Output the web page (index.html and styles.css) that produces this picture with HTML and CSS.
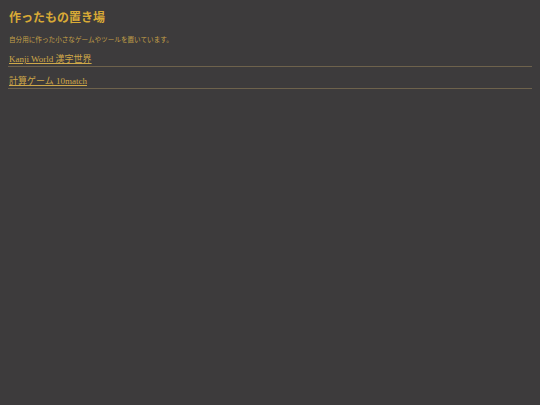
FILE: index.html
```html
<!DOCTYPE html>
<html lang="ja">
<head>
<meta charset="utf-8">
<title>作ったもの置き場</title>
<link rel="stylesheet" href="styles.css">
</head>
<body>
<main class="page">
  <h1 class="title">作ったもの置き場</h1>
  <p class="lead">自分用に作った小さなゲームやツールを置いています。</p>
  <ul class="list">
    <li class="item"><a class="link" href="#">Kanji World 漢字世界</a></li>
    <li class="item"><a class="link" href="#">計算ゲーム 10match</a></li>
  </ul>
</main>
</body>
</html>
```

FILE: styles.css
```css
html, body {
  margin: 0;
  padding: 0;
  background: #3d3b3c;
  height: 100%;
}
body {
  font-family: "Liberation Serif", "Noto Sans CJK JP", serif;
  color: #d1a63a;
}
.page {
  padding: 8px 8px;
}
.title {
  margin: 2px 0 0 1px;
  font-size: 12px;
  line-height: 16px;
  font-weight: bold;
  color: #d9aa36;
}
.lead {
  margin: 9px 0 0 1px;
  font-size: 6.6px;
  line-height: 10px;
  color: #c4a048;
}
.list {
  list-style: none;
  margin: 3px 0 0;
  padding: 0;
}
.item {
  display: block;
  border-bottom: 1px solid #6e624c;
  padding: 0 1px 5px;
  margin-bottom: 3px;
  height: 13px;
}
.link {
  display: inline-block;
  font-size: 9px;
  line-height: 13px;
  color: #cfa849;
  text-decoration: underline;
}
```
